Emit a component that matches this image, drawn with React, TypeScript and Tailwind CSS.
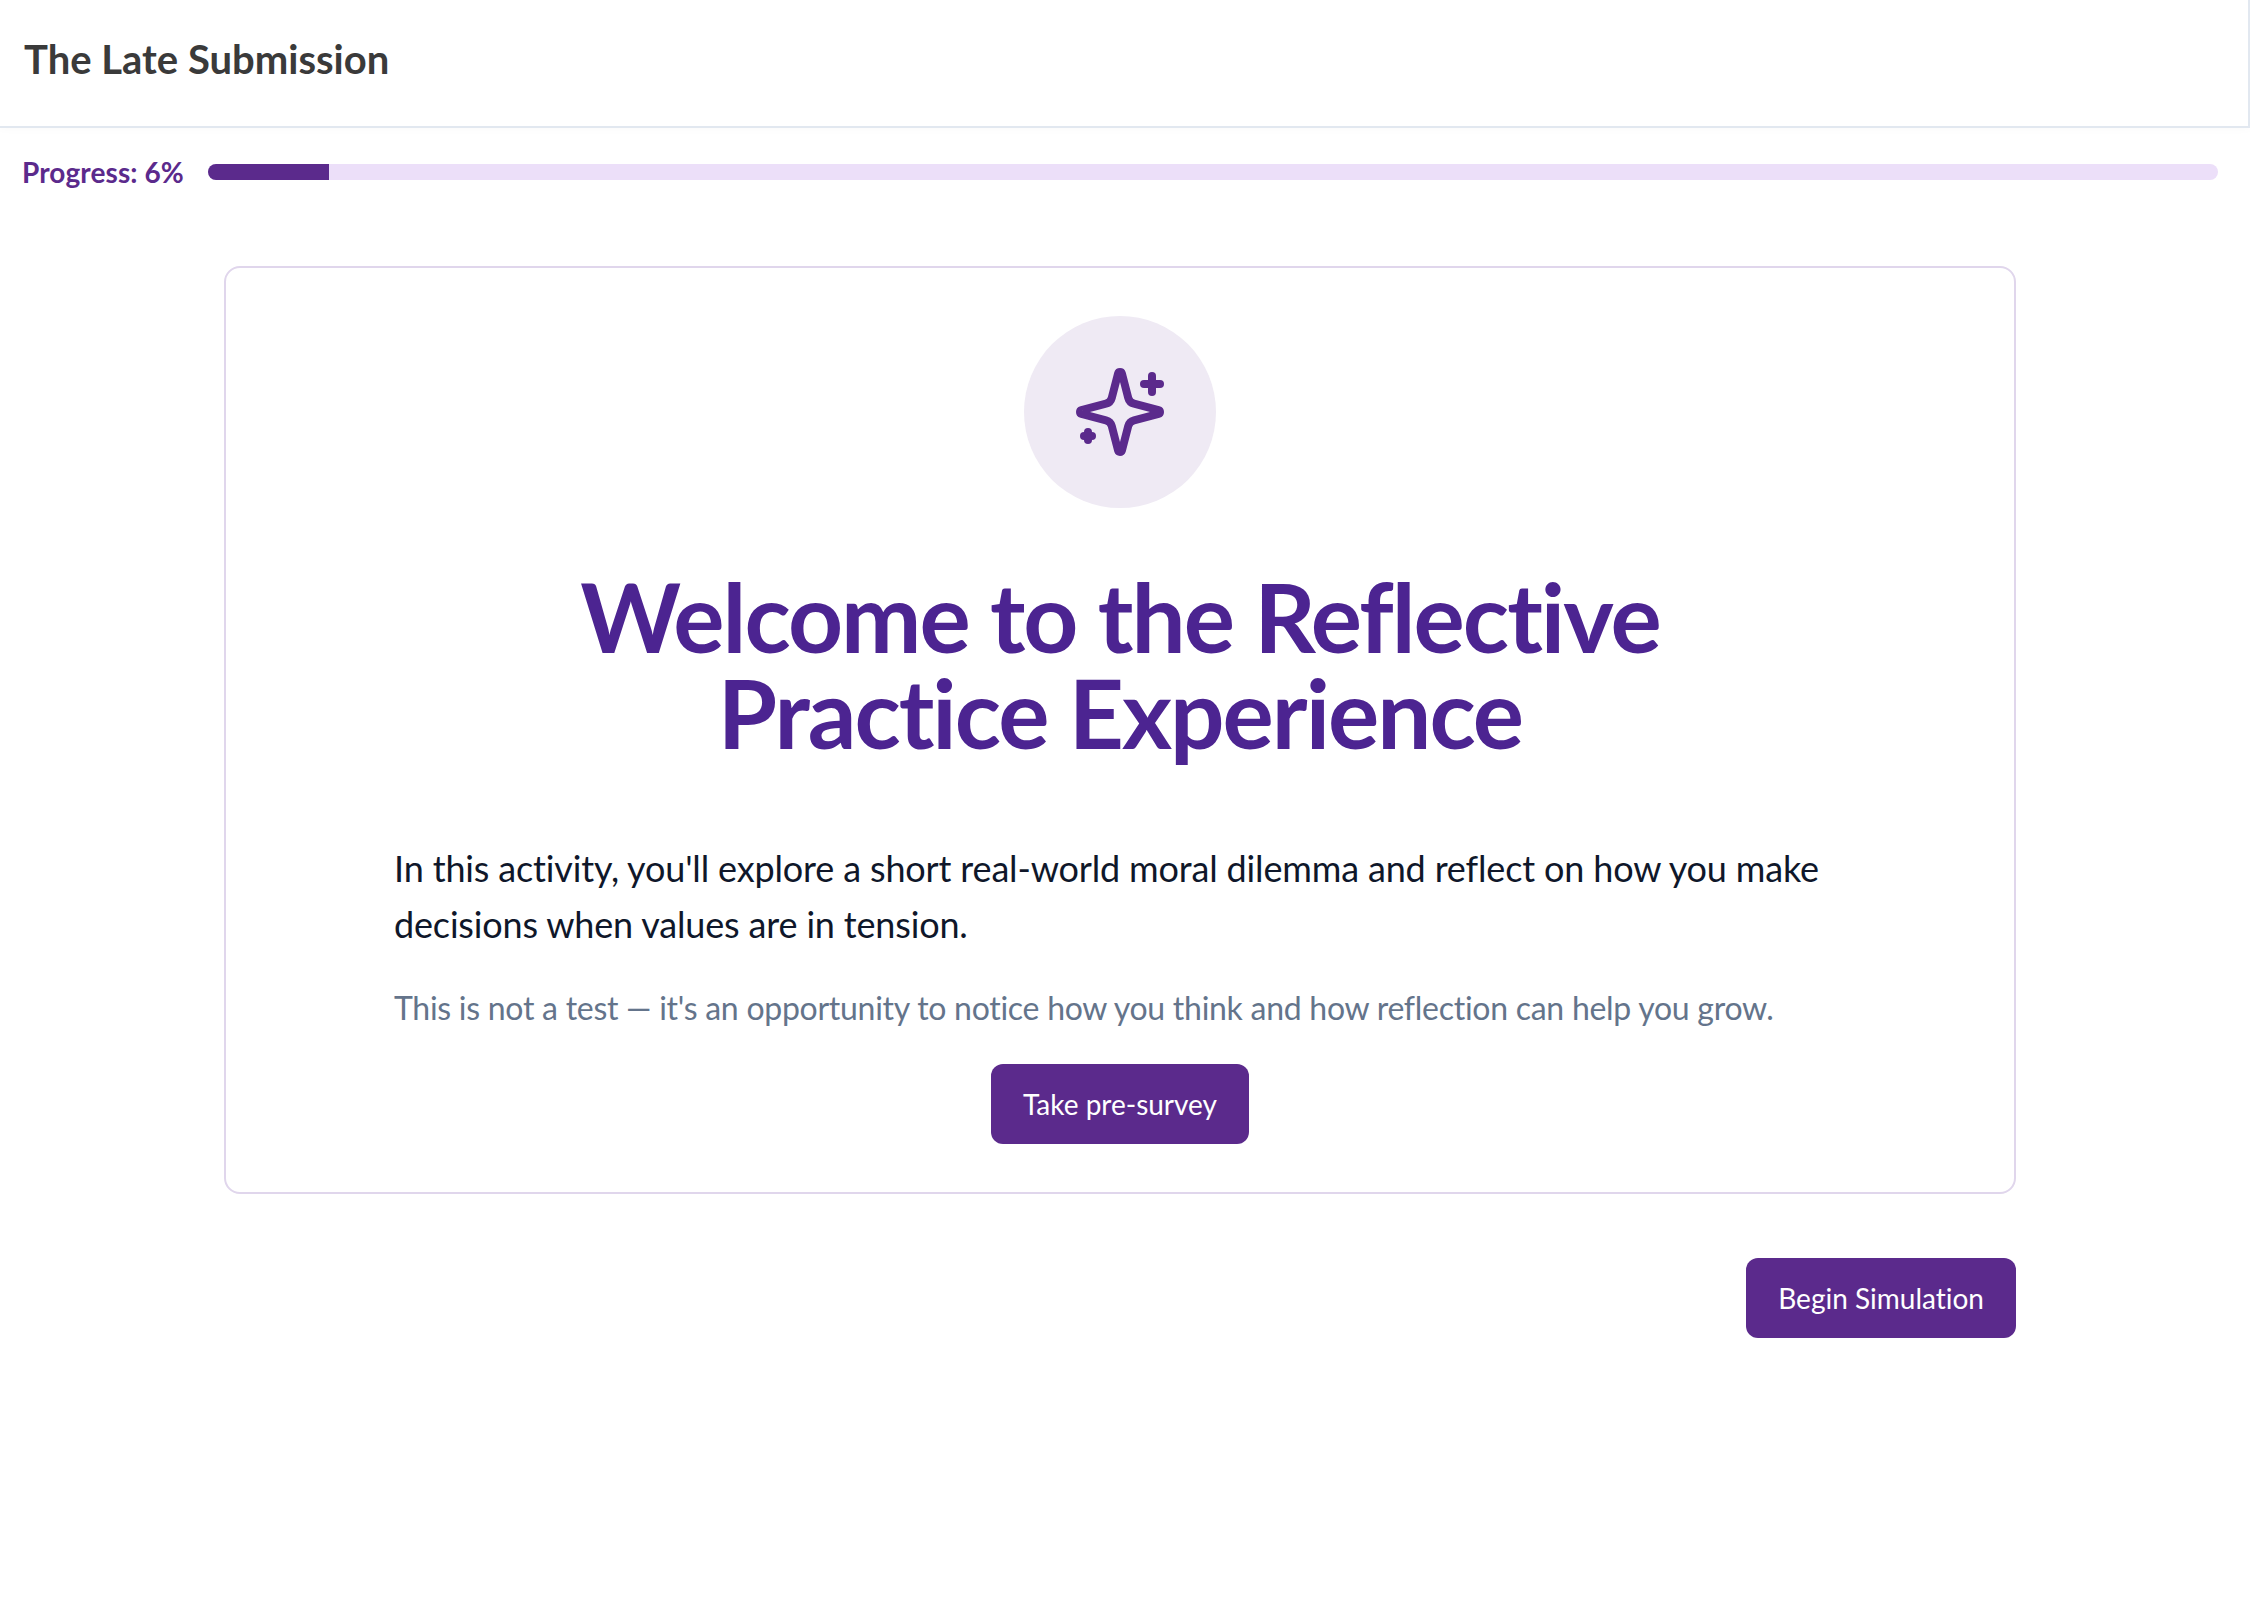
function SparklesIcon() {
  return (
    <svg width="96" height="96" viewBox="0 0 24 24" fill="none" stroke="currentColor" strokeWidth="2" strokeLinecap="round" strokeLinejoin="round" className="text-[#5b2a8c]">
      <path d="M9.937 15.5A2 2 0 0 0 8.5 14.063l-6.135-1.582a.5.5 0 0 1 0-.962L8.5 9.936A2 2 0 0 0 9.937 8.5l1.582-6.135a.5.5 0 0 1 .963 0L14.063 8.5A2 2 0 0 0 15.5 9.937l6.135 1.581a.5.5 0 0 1 0 .964L15.5 14.063a2 2 0 0 0-1.437 1.437l-1.582 6.135a.5.5 0 0 1-.963 0z" />
      <path d="M20 3v4" />
      <path d="M22 5h-4" />
      <path d="M4 17v2" />
      <path d="M5 18H3" />
    </svg>
  );
}

export default function App() {
  return (
    <div className="min-h-[1620px] bg-white font-['Lato',sans-serif] [font-variant-ligatures:no-common-ligatures]">
      <header className="flex h-[128px] items-center border-b-2 border-r-2 border-[#e2e8f0] pb-2 pl-6 shadow-[0_2px_8px_rgba(0,0,0,0.02)]">
        <h1 className="text-[40px] leading-[48px] font-bold text-[#3a3a3a]">The Late Submission</h1>
      </header>

      <div className="flex h-[72px] items-center pl-[22px] pr-8 pt-[16px]">
        <span className="w-[162px] text-[28px] leading-[36px] font-bold tracking-[0.1px] text-[#5b2a8c]">Progress: 6%</span>
        <div className="ml-6 h-4 flex-1 overflow-hidden rounded-full bg-[#ecdff9]">
          <div className="h-full bg-[#5b2a8c]" style={{ width: "6%" }} />
        </div>
      </div>

      <main className="ml-56 mt-[66px] w-[1792px]">
        <section className="flex flex-col items-center rounded-2xl border-2 border-[#e0d6ec] px-[168px] pt-12 pb-12">
          <div className="flex h-48 w-48 items-center justify-center rounded-full bg-[#efeaf4]">
            <SparklesIcon />
          </div>
          <h2 className="mt-[60px] text-center text-[96px] leading-[96px] font-bold tracking-[-2px] text-[#4c2491]">
            Welcome to the Reflective
            <br />
            Practice Experience
          </h2>
          <p className="mt-20 w-full text-[36px] leading-[56px] tracking-[-0.16px] text-[#0f172a]">
            In this activity, you'll explore a short real-world moral dilemma and reflect on how you make decisions when values are in tension.
          </p>
          <p className="mt-8 w-full text-[32px] leading-[48px] tracking-[-0.27px] text-[#64748b]">
            This is not a test — it's an opportunity to notice how you think and how reflection can help you grow.
          </p>
          <button className="mt-8 flex h-20 items-center rounded-xl bg-[#5b2a8c] px-8 text-[28px] text-white">Take pre-survey</button>
        </section>

        <div className="mt-16 flex justify-end">
          <button className="flex h-20 items-center rounded-xl bg-[#5b2a8c] px-8 text-[28px] text-white">Begin Simulation</button>
        </div>
      </main>
    </div>
  );
}
